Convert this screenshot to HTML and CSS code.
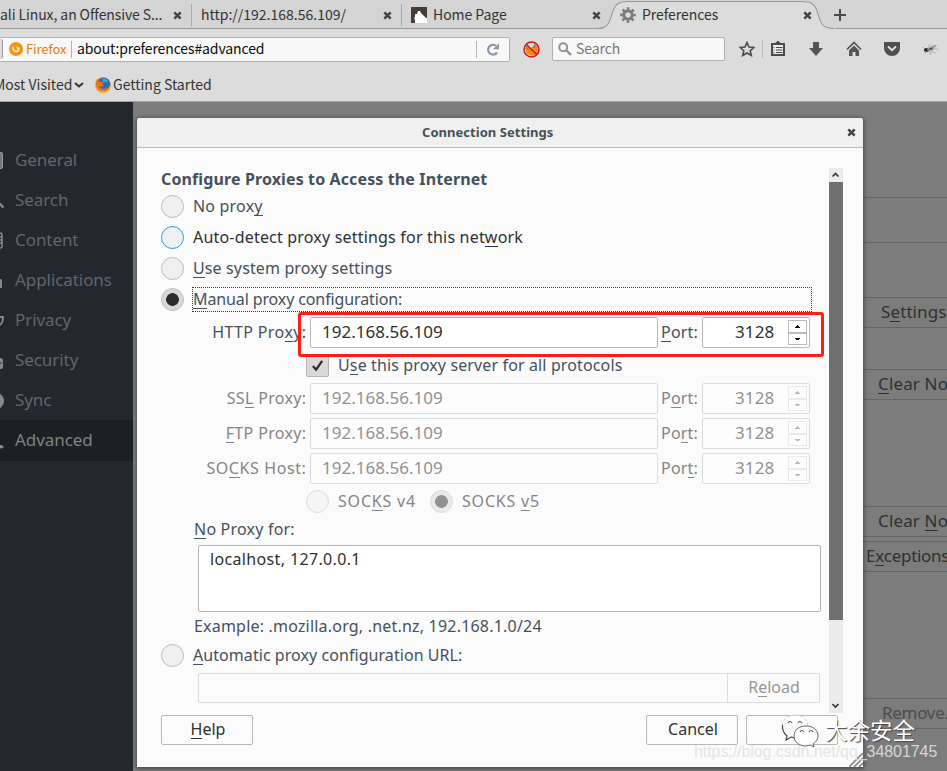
FILE: index.html
```
<!DOCTYPE html>
<html lang="en">
<head>
<meta charset="utf-8">
<title>Preferences</title>
<link rel="stylesheet" href="styles.css">
</head>
<body>
<svg width="0" height="0" class="defs">
  <symbol id="x" viewBox="0 0 9 9"><path d="M1.3 1.3 7.7 7.7M7.7 1.3 1.3 7.7" fill="none" stroke="#444" stroke-width="2.5"/></symbol>
</svg>
<header class="chrome">
  <div class="tabs">
    <div class="tab tab-one"><span class="s-15">ali Linux, an Offensive S...</span><svg class="close"><use href="#x"/></svg></div>
    <div class="tab tab-two"><span>http://192.168.56.109/</span><svg class="close"><use href="#x"/></svg></div>
    <div class="tab tab-three">
      <svg class="fav" viewBox="0 0 16 16"><path fill="#493c35" d="M0 0h16v16H0z"/><path fill="#fff" d="M4 16v-3l-1-2 1-1V7h2l1-3h2l1 2 3 3 2 2h1v5z"/></svg>
      <span class="s-10">Home Page</span><svg class="close"><use href="#x"/></svg>
    </div>
    <div class="tab tab-active">
      <svg class="curve" width="240" height="30" viewBox="0 0 240 30"><path d="M0 29.5C15 29.5 13 20 17 11 20 3 24 1.5 32 1.5H206C214 1.5 218 3 221 11 225 20 223 28.5 238 28.5H240V30H0z" fill="#dcdcdc"/><path d="M0 28.5C15 28.5 13 20 17 11 20 3 24 1.5 32 1.5H206C214 1.5 218 3 221 11 225 20 223 28.5 238 28.5" fill="none" stroke="#939ba2" stroke-width="1.1"/></svg>
      <svg class="gear" viewBox="0 0 16 16"><g fill="none" stroke="#777b80"><circle cx="8" cy="8" r="4.2" stroke-width="3"/><circle cx="8" cy="8" r="6.6" stroke-width="2.4" stroke-dasharray="2.6 2.584" stroke-dashoffset="1.3"/></g></svg>
      <span class="s-10">Preferences</span><svg class="close"><use href="#x"/></svg>
    </div>
    <svg class="plus" viewBox="0 0 12 12"><path d="M6 0v12M0 6h12" stroke="#4d4d4d" stroke-width="2"/></svg>
  </div>
  <div class="nav">
    <div class="url">
      <i class="back"></i>
      <svg class="ff" viewBox="0 0 14 14"><circle cx="7" cy="7" r="7" fill="#f7930c"/><path d="M4 3.5C2 7 4 10.5 7.3 10.5S11.500 7 9.700 4.500L9 6 7 3.500 7.500 6 9 7.500 7 8.500 5 7z" fill="#fbe7c5"/></svg>
      <span class="brand">Firefox</span>
      <span class="addr">about:preferences#advanced</span>
      <svg class="reload" viewBox="0 0 14 14"><path d="M11 10A4.900 4.900 0 1 1 10 3.300" fill="none" stroke="#8a99a8" stroke-width="2.200"/><path d="M13 .8v5.900H7z" fill="#8a99a8"/></svg>
    </div>
    <svg class="noscript" viewBox="0 0 17 17"><path d="M2 7 5 5l3 2 4-4 3 3-1 6-4 3-6-2z" fill="#ef8d10"/><path d="m3 5 2 4M12 3l-1 4M8 8l5 4" stroke="#69717c"/><g fill="none" stroke="#d31620" stroke-width="1.500"><circle cx="8.500" cy="8.500" r="7.500"/><path d="m3.200 3.200 10.600 10.600"/></g></svg>
    <div class="search"><svg viewBox="0 0 14 14"><g fill="none" stroke="#929292"><circle cx="5.200" cy="5.200" r="4" stroke-width="2"/><path d="m8 8 5 5" stroke-width="2.400"/></g></svg><span>Search</span></div>
    <svg class="ic star" viewBox="0 0 16 16"><path d="m8 1.500 2 4.500 4.800.5-3.600 3.200 1.100 4.800L8 12l-4.300 2.500 1.100-4.800L1.200 6.500 6 6z" fill="none" stroke="#4b4b4b" stroke-width="1.600"/></svg>
    <svg class="ic list" viewBox="0 0 16 16"><path d="M2 3h3.500l2.500-2 2.500 2H14v11H2z" fill="#ededed" stroke="#4b4b4b" stroke-width="2"/><path d="M5.500 2.500 8 .5l2.500 2V4h-5z" fill="#4b4b4b"/><path d="M3.500 6.500h1M6 6.500h6.500M3.500 9h1M6 9h6.500M3.500 11.500h1M6 11.500h6.500" stroke="#4b4b4b" stroke-width="1.200"/></svg>
    <svg class="ic down" viewBox="0 0 16 16"><path d="M5 1h6v6h4l-7 8-7-8h4z" fill="#555"/></svg>
    <svg class="ic home" viewBox="0 0 16 16"><path d="m1 8.500 7-7 7 7" fill="none" stroke="#555" stroke-width="1.700"/><path d="m3 9.500 5-5 5 5V15H9.500v-4h-3v4H3z" fill="#555"/></svg>
    <svg class="ic pocket" viewBox="0 0 16 16"><path d="M0 1h16v6a8 8 0 0 1-16 0z" fill="#4f4f4f"/><path d="m4 5.500 4 3.700 4-3.700" fill="none" stroke="#e2e2e2" stroke-width="2"/></svg>
    <svg class="ic fly" viewBox="0 0 16 16"><ellipse cx="4.500" cy="9" rx="2.600" ry="2" fill="#222"/><path d="M6 9c2-4 6-5 9-5-2 3-5 4-9 5z" fill="#999"/><path d="m5 9 3-6M5 9l9 3M4 10l-1 3M7 9l2 5M3 8 0 6M9 8l7 0" stroke="#999" stroke-width=".7"/><ellipse cx="9" cy="8" rx="1.800" ry="1.200" fill="#555"/></svg>
  </div>
  <div class="marks">
    <span class="most">Most Visited</span>
    <svg class="chev" viewBox="0 0 10 6"><path d="m1 1 4 3.500L9 1" fill="none" stroke="#333" stroke-width="2"/></svg>
    <svg class="fox" viewBox="0 0 16 16"><circle cx="8" cy="8" r="7.700" fill="#e4591b"/><circle cx="9" cy="6.500" r="5.800" fill="#2470b5"/><path d="M8 1.500c3 0 5 2 5 4l-3-1-2 1z" fill="#37afe0"/><path d="M1 4c0 7 2 10 7 10 4 0 6-2 7-6 1 5-2 8-7 8S0 12 0 8z" fill="#f5b52e"/><path d="M2 2.500 5 5l3 0-1 2 2 1-2 2-3-1c2 4 6 4 8 1 0 3-3 4-5 4-6-1-7-7-5-12z" fill="#ee7320"/></svg>
    <span>Getting Started</span>
  </div>
</header>
<main>
  <nav class="side">
    <div><svg viewBox="0 0 4 20"><rect x="-5" y="2.500" width="7.500" height="16" rx="1.500" fill="#777" stroke="#999"/></svg><span>General</span></div>
    <div><svg viewBox="0 0 4 20"><path d="m-2 12 5.500 5.500" stroke="#888" stroke-width="2.500"/></svg><span>Search</span></div>
    <div><svg viewBox="0 0 4 20"><path d="M0 3q2 0 2 2v12q0 1-2 1M0 7h2M0 10h2M0 13h2" fill="none" stroke="#888" stroke-width="1.500"/></svg><span>Content</span></div>
    <div><svg viewBox="0 0 4 20"><path d="M0 9q2 0 2 2v7H0z" fill="#888"/></svg><span>Applications</span></div>
    <div><svg viewBox="0 0 4 20"><path d="M0 7h3q0 6-3 8" fill="none" stroke="#888" stroke-width="1.800"/></svg><span>Privacy</span></div>
    <div><svg viewBox="0 0 4 20"><path d="M0 8q3 0 3 3v6q0 2-3 2z" fill="#888"/><path d="M0 13h2" stroke="#23282f"/></svg><span>Security</span></div>
    <div><svg viewBox="0 0 4 20"><circle cx="-4" cy="11" r="8" fill="#888"/></svg><span>Sync</span></div>
    <div class="on"><svg viewBox="0 0 4 20"><path d="M-2 15q3 3 5 1" fill="none" stroke="#888" stroke-width="3"/></svg><span>Advanced</span></div>
  </nav>
  <section class="pane">
    <div class="band"></div>
    <div class="btn b1"><span>S<u>e</u>ttings…</span></div>
    <div class="btn b2"><span><u>C</u>lear Now</span></div>
    <div class="btn b3"><span>Clear <u>N</u>ow</span></div>
    <div class="btn b4"><span>E<u>x</u>ceptions…</span></div>
    <div class="btn b5"><span>Remove…</span></div>
  </section>
</main>

<div class="dialog">
  <div class="title"><span>Connection Settings</span><svg class="close"><use href="#x"/></svg></div>
  <div class="body">
    <div class="form">
      <h1>Configure Proxies to Access the Internet</h1>
      <div class="row"><i class="radio"></i><span class="s-20">No prox<u>y</u></span></div>
      <div class="row dark"><i class="radio hot"></i><span class="s-20">Auto-detect proxy settings for this net<u>w</u>ork</span></div>
      <div class="row"><i class="radio"></i><span class="s-15p"><u>U</u>se system proxy settings</span></div>
      <div class="row"><i class="radio sel"></i><span class="focus"><u>M</u>anual proxy configuration:</span></div>
      <div class="host"><label>HTTP Pro<u>x</u>y:</label><div class="in">192.168.56.109</div><label class="port"><u>P</u>ort:</label><div class="num">3128<i class="spin"></i></div></div>
      <div class="row deep"><i class="check"><svg viewBox="0 0 14 14"><path d="m2 7.500 3.500 4L12 2" fill="none" stroke="#2b2b2b" stroke-width="2.400"/></svg></i><span class="s-15p">U<u>s</u>e this proxy server for all protocols</span></div>
      <div class="host off"><label>SS<u>L</u> Proxy:</label><div class="in">192.168.56.109</div><label class="port">P<u>o</u>rt:</label><div class="num">3128<i class="spin"></i></div></div>
      <div class="host off"><label><u>F</u>TP Proxy:</label><div class="in">192.168.56.109</div><label class="port">Po<u>r</u>t:</label><div class="num">3128<i class="spin"></i></div></div>
      <div class="host off"><label class="socks">SO<u>C</u>KS Host:</label><div class="in">192.168.56.109</div><label class="port">Por<u>t</u>:</label><div class="num">3128<i class="spin"></i></div></div>
      <div class="row deep off"><i class="radio"></i><span class="ver">SOC<u>K</u>S v4</span><i class="radio sel"></i><span class="ver">SOCKS <u>v</u>5</span></div>
      <div class="noproxy"><u>N</u>o Proxy for:</div>
      <div class="area">localhost, 127.0.0.1</div>
      <div class="example">Example: .mozilla.org, .net.nz, 192.168.1.0/24</div>
      <div class="row"><i class="radio"></i><span class="s-5"><u>A</u>utomatic proxy configuration URL:</span></div>
      <div class="pac"><div></div><div>R<u>e</u>load</div></div>
    </div>
    <div class="scroll">
      <svg viewBox="0 0 14 14"><path d="m3.500 8.500 3-3 3 3" fill="none" stroke="#333" stroke-width="1.600"/></svg>
      <i></i>
      <svg viewBox="0 0 14 14"><path d="m3.500 5 3 3 3-3" fill="none" stroke="#333" stroke-width="1.600"/></svg>
    </div>
  </div>
  <div class="foot"><div><u>H</u>elp</div><div>Cancel</div><div class="ok">OK</div></div>
  <svg class="grip" viewBox="0 0 14 14"><path d="M0 14 14 0M5 14l9-9M10 14l4-4" stroke="#8d8d8d" stroke-width="1.800"/></svg>
</div>
<div class="mark-box"></div>
<div class="wm-name">
  <svg viewBox="0 0 38 34"><path d="M14 1C6 1 1 6 1 13c0 4 2 7 5 9l-1 4 5-3 4 1c8 0 13-5 13-11S22 1 14 1z" fill="#fff" fill-opacity=".85" stroke="#bbb" stroke-width=".7" stroke-dasharray="3 2"/><path d="M1.500 11c-.5 5 1 8 4.500 11l-1 4 5-3 4 1" fill="none" stroke="#444" stroke-width="1.100"/><path d="M25 12c-7 0-12 4-12 10s5 10 12 10l4-1 4 2-1-3c3-2 5-5 5-8 0-6-5-10-12-10z" fill="#fff" fill-opacity=".93" stroke="#555" stroke-width=".9"/><path d="M7 9q2-3 4 0M17 9q2-3 4 0M19 18q2-3 4 0M28 18q2-3 4 0" fill="none" stroke="#555" stroke-width="1.200"/></svg>
  <span>大余安全</span>
</div>
<div class="wm-url">https://blog.csdn.net/qq_34801745</div>
</body>
</html>
```
FILE: styles.css
```
* { box-sizing: border-box; }
body { margin: 0; width: 947px; height: 771px; overflow: hidden; position: relative; font: 16px/24px "Noto Sans", sans-serif; color: #46515c; background: #7c7c7c; white-space: nowrap; }
svg { display: block; flex: none; overflow: hidden; }
i { display: block; flex: none; }
u { text-decoration: none; box-shadow: inset 0 -1px currentColor; display: inline-block; line-height: 20px; height: 20px; }
.defs { position: absolute; }

.chrome { height: 102px; background: #dcdcdc; border-bottom: 1px solid #a5a5a5; font: 14px/20px "Noto Sans CJK SC", sans-serif; color: #333; }
.chrome span { padding-bottom: 2px; }
.tabs { height: 29px; display: flex; background: #d4d4d4; border-bottom: 1px solid #989898; }
.tab { display: flex; align-items: center; height: 30px; }
.close { width: 9px; height: 9px; margin-left: auto; }
.tab-one { width: 192px; padding-right: 10px; background: linear-gradient(#aaa, #aaa) 191px 4px / 1px 22px no-repeat; }
.tab-two { width: 210px; padding: 0 10px 0 9px; background: linear-gradient(#aaa, #aaa) 209px 4px / 1px 22px no-repeat; }
.tab-three { width: 199px; padding-left: 9px; }
.fav { width: 16px; height: 16px; margin-right: 6px; }
.tab-active { width: 235px; padding: 0 24px 0 19px; position: relative; z-index: 1; }
.tab-active > * { position: relative; }
.tab-active .curve { position: absolute; left: -5px; top: 0; }
.gear { width: 16px; height: 16px; margin-right: 6px; }
.plus { width: 12px; height: 12px; margin: 9px 0 0 -2px; z-index: 1; position: relative; }
.s-15 { letter-spacing: -.1px; }
.s-10 { letter-spacing: -.05px; }

.nav { height: 40px; display: flex; align-items: center; }
.url { width: 510px; height: 25px; display: flex; align-items: center; border: 1px solid #b1b1b1; border-left: 0; border-radius: 0 2px 2px 0; background: #f8f8f8; }
.back { width: 3px; height: 20px; border-right: 1px solid #999; border-radius: 0 8px 8px 0; margin-right: 6px; background: #dedede; }
.ff { width: 14px; height: 14px; }
.chrome .brand { color: #e27b12; margin-left: 3px; width: 46px; font-size: 13px; letter-spacing: -.1px; border-right: 1px solid #b3b3b3; line-height: 16px; padding-bottom: 1px; }
.addr { margin-left: 5px; color: #0c0c0c; letter-spacing: -.12px; }
.reload { width: 33px; height: 17px; margin-left: auto; padding: 1px 9px; border-left: 1px solid #b3b3b3; }
.noscript { width: 17px; height: 17px; margin: 0 12px 0 13px; }
.search { width: 173px; height: 24px; display: flex; align-items: center; padding-left: 5px; border: 1px solid #b1b1b1; border-radius: 2px; background: #f8f8f8; color: #777; letter-spacing: -.1px; }
.search svg { width: 14px; height: 14px; margin-right: 4px; }
.ic { width: 16px; height: 16px; }
.star { margin-left: 14px; }
.list { width: 24px; margin-left: 7px; padding-left: 7px; border-left: 1px solid #b9b9b9; height: 18px; }
.down { margin-left: 22px; }
.home, .pocket, .fly { margin-left: 22px; }

.marks { height: 32px; display: flex; align-items: center; }
.most { margin-left: -6px; letter-spacing: 0; width: 80px; }
.chev { width: 10px; height: 6px; }
.fox { width: 16px; height: 16px; margin: 0 2px 0 11px; }

main { display: flex; height: 669px; }
.side { width: 133px; background: #23282f; padding-top: 38px; font-size: 17px; color: #63666a; }
.side div { height: 40px; display: flex; align-items: center; letter-spacing: -.07px; }
.side svg { width: 4px; height: 20px; margin-right: 11px; }
.side .on { background: #1b2024; color: #828282; height: 41px; padding-bottom: 1px; }
.pane { flex: 1; overflow: hidden; padding: 95px 0 0 726px; background: #7c7c7c; color: #303030; padding-left: 730px; margin-left: 0; }
.band { height: 46px; border: solid #656565; border-width: 1px 0; }
.btn { height: 31px; border: solid #656565; border-width: 1px 0; font-size: 17px; line-height: 27px; padding-left: 15px; letter-spacing: .15px; }
.b1 { margin-top: 54px; padding-left: 18px; letter-spacing: .1px; }
.b2 { margin-top: 41px; }
.b3 { margin-top: 106px; }
.b4 { margin-top: 4px; padding-left: 3px; letter-spacing: -.3px; }
.b5 { margin-top: 126px; padding-left: 19px; color: #4c4c4c; letter-spacing: -.3px; }

.dialog { position: absolute; left: 137px; top: 118px; width: 726px; height: 649px; background: #fbfbfb; border-radius: 3px 3px 0 0; box-shadow: 0 1px 4px 1px rgba(0,0,0,.4); }
.title { height: 30px; display: flex; align-items: center; padding: 0 7px 1px 285px; background: #f0f0f0; border-bottom: 1px solid #bababa; border-radius: 3px 3px 0 0; font-weight: 700; font-size: 13px; letter-spacing: .04px; }
.title span { padding-bottom: 1px; }
.body { display: flex; height: 565px; padding-left: 24px; }
.form { width: 660px; padding-top: 17px; }
h1 { margin: 0; height: 26px; font-size: 16px; line-height: 28px; letter-spacing: .12px; }
.row { height: 31px; display: flex; align-items: center; }
.row span { line-height: 23px; }
.dark { color: #2d3135; }
.radio { width: 23px; height: 23px; margin-right: 9px; border-radius: 50%; border: 1px solid #bdbdbd; background: #f0f0f0; }
.hot { border-color: #2b9ddd; }
.sel { background: radial-gradient(circle, #2b2b2b 6px, #d8d8d8 6.7px); }
.row .focus { margin-left: -1px; width: 620px; height: 25px; line-height: 22px; border: 1px dotted #333d47; letter-spacing: -.12px; }
.s-20 { letter-spacing: .19px; }
.s-15p { letter-spacing: .13px; }
.s-5 { letter-spacing: .06px; }
.host { height: 35px; display: flex; align-items: center; }
.host label { width: 145.500px; text-align: right; letter-spacing: .35px; padding-bottom: 2px; }
.host .socks { letter-spacing: .6px; }
.in { width: 348px; height: 31px; margin: 0 3px 0 3.500px; padding-left: 11px; background: #fff; border: 1px solid #b8b8b8; border-radius: 2px; font-size: 17px; line-height: 27px; color: #303030; }
.host .port { width: 38px; text-align: left; letter-spacing: .2px; }
.num { width: 108px; height: 31px; margin-left: 3px; padding: 0 2px 0 32px; display: flex; justify-content: space-between; background: #fff; border: 1px solid #b8b8b8; border-radius: 2px; font-size: 17px; line-height: 27px; color: #303030; letter-spacing: .15px; }
.spin { width: 19px; height: 25px; margin-top: 2px; border: 1px solid #bbb; background:
  linear-gradient(#111, #111) 8px 4px / 1px 1px no-repeat, linear-gradient(#111, #111) 7px 5px / 3px 1px no-repeat, linear-gradient(#111, #111) 6px 6px / 5px 1px no-repeat,
  linear-gradient(#111, #111) 6px 17px / 5px 1px no-repeat, linear-gradient(#111, #111) 7px 18px / 3px 1px no-repeat, linear-gradient(#bbb, #bbb) 0 11px / 100% 2px no-repeat; }
.off label, .off span { color: #858585; }
.off .in, .off .num { color: #929292; border-color: #dcdcdc; background: #fdfdfd; }
.off .radio { opacity: .5; }
.off .spin { opacity: .28; }
.deep { padding-left: 145px; }
.check { width: 23px; height: 23px; margin-right: 9px; padding: 4px; border: 1px solid #b5b5b5; border-radius: 2px; background: #d9d9d9; }
.ver { width: 92px; letter-spacing: .8px; }
.noproxy { height: 28px; line-height: 24px; padding-left: 33px; letter-spacing: .2px; }
.area { width: 623px; height: 67px; margin-left: 37px; padding-left: 11px; line-height: 26px; letter-spacing: .35px; color: #303030; background: #fff; border: 1px solid #b5b5b5; border-radius: 2px; }
.example { height: 28px; line-height: 29px; padding-left: 33px; letter-spacing: .2px; }
.pac { display: flex; width: 622px; height: 30px; margin: 2px 0 0 37px; border: 1px solid #dcdcdc; border-radius: 2px; line-height: 27px; color: #969696; }
.pac div:first-child { width: 529px; border-right: 1px solid #dcdcdc; }
.pac div:last-child { flex: 1; text-align: center; padding-left: 1px; }
.scroll { width: 14px; height: 545px; margin: 20px 0 0 8px; background: #ececec; display: flex; flex-direction: column; }
.scroll svg { width: 14px; height: 14px; }
.scroll i { height: 438px; margin-bottom: auto; background: #6f6f6f; }
.foot { display: flex; padding: 2px 25px 0 24px; gap: 8px; color: #303030; }
.foot div { width: 92px; height: 30px; border: 1px solid #b8b8b8; border-radius: 2px; text-align: center; line-height: 26px; padding-left: 2px; }
.foot div:first-child { margin-right: 385px; }
.foot .ok { color: #aaa; }
.grip { position: absolute; right: 0; bottom: 0; width: 14px; height: 14px; }

.mark-box { position: absolute; left: 298px; top: 312px; width: 526px; height: 45px; border: 3px solid #fb2015; border-radius: 3px; }
.wm-name { position: absolute; left: 781px; top: 712px; display: flex; align-items: center; color: #fff; font: 22.500px/34px "Noto Sans CJK SC", sans-serif; text-shadow: 1px 1px 1px #444; }
.wm-name svg { width: 38px; height: 34px; margin-right: 6px; }
.wm-name span { padding-bottom: 4px; }
.wm-url { position: absolute; left: 694px; top: 742px; font: 16px/20px "Liberation Sans", sans-serif; color: rgba(225,225,225,.9); letter-spacing: -.07px; }
```
